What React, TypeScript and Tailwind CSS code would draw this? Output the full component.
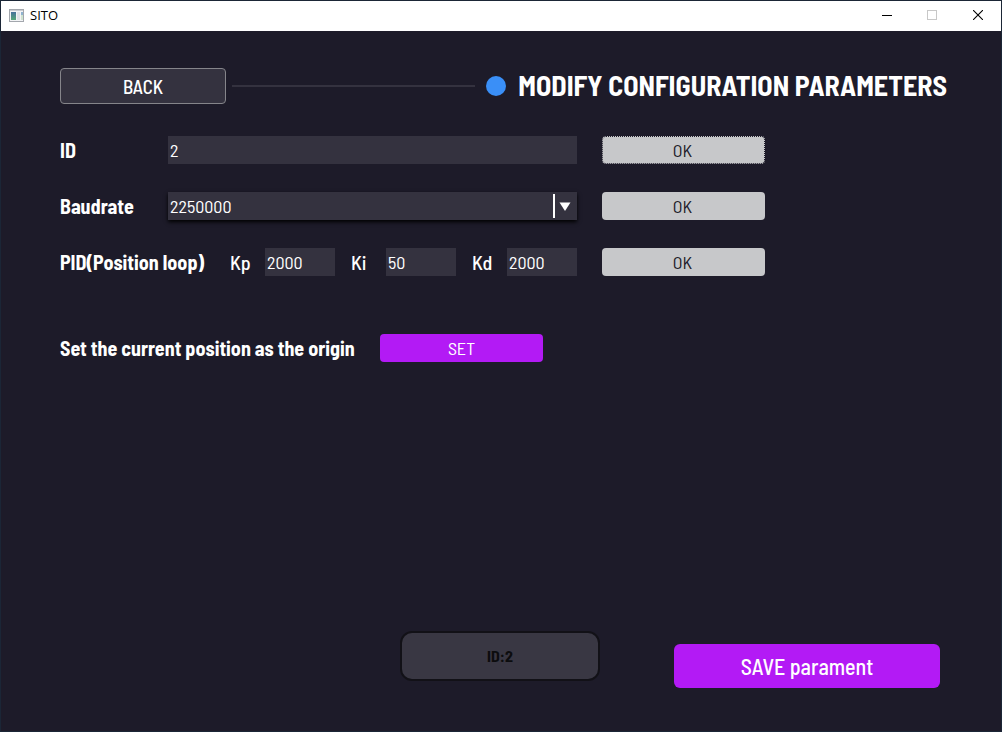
import React from "react";

const OK_ROW = "h-7 w-[163px] shrink-0 rounded bg-[#c7c8ca] pr-0.5 text-[18px] leading-7 text-[#1d1b29]";
const FIELD = "h-7 min-w-0 bg-[#34323f] px-0.5 text-[18px] leading-7 text-white outline-none";
const LABEL = "shrink-0 whitespace-nowrap text-[20px] font-bold leading-7";
const CAPTION_BUTTON = "flex h-full items-center justify-center pb-0.5";

function AppIcon() {
  return (
    <svg width="15" height="13" viewBox="0 0 15 13" aria-hidden="true">
      <defs>
        <linearGradient id="pane" x1="0" y1="0" x2="0" y2="1">
          <stop offset="0" stopColor="#47719c" />
          <stop offset="1" stopColor="#57a878" />
        </linearGradient>
      </defs>
      <rect x="0.5" y="0.5" width="14" height="12" fill="#f3f4f6" stroke="#a3a7ad" />
      <rect x="1" y="1" width="13" height="1" fill="#c9ccd1" />
      <rect x="2" y="3" width="5" height="8" fill="url(#pane)" />
      <rect x="8" y="3" width="3" height="8" fill="#dfe2e6" />
      <rect x="12" y="3" width="2" height="3" fill="#8fb3cf" />
      <rect x="12" y="6" width="2" height="5" fill="#cfe3cf" />
    </svg>
  );
}

function TitleBar() {
  return (
    <header className="flex h-[30px] items-center bg-white pl-2 text-black">
      <div className="flex flex-1 items-center gap-1.5 pb-0.5">
        <AppIcon />
        <h2 className="font-['Open_Sans','Noto_Sans',sans-serif] text-[13px] leading-5">SITO</h2>
      </div>
      <button type="button" aria-label="Minimize" className={`${CAPTION_BUTTON} w-[45px]`}>
        <svg width="10" height="10" viewBox="0 0 10 10" aria-hidden="true">
          <path d="M0 5.5H10" stroke="#000" />
        </svg>
      </button>
      <button type="button" aria-label="Maximize" disabled className={`${CAPTION_BUTTON} w-[46px]`}>
        <svg width="10" height="10" viewBox="0 0 10 10" aria-hidden="true">
          <rect x="0.5" y="0.5" width="9" height="9" fill="none" stroke="#c8c8c8" />
        </svg>
      </button>
      <button type="button" aria-label="Close" className={`${CAPTION_BUTTON} w-[46px]`}>
        <svg width="10" height="10" viewBox="0 0 10 10" aria-hidden="true">
          <path d="M0 0L10 10M10 0L0 10" stroke="#000" strokeWidth="1.1" />
        </svg>
      </button>
    </header>
  );
}

function Gain({ id, label, value }: { id: string; label: string; value: string }) {
  return (
    <div className="flex flex-1 items-center">
      <label htmlFor={id} className="w-[35px] shrink-0 text-[20px] font-medium leading-7">
        {label}
      </label>
      <input id={id} defaultValue={value} className={`${FIELD} w-0 flex-1`} />
    </div>
  );
}

export default function App() {
  return (
    <div className="flex min-h-screen flex-col border border-[#1b2636] bg-[#1d1b29] font-['Barlow_Semi_Condensed','Roboto_Condensed',sans-serif] text-white">
      <TitleBar />
      <main className="flex flex-1 flex-col pt-[37px] pr-[54px] pb-[43px] pl-[59px]">
        <div className="flex items-center">
          <button
            type="button"
            className="h-9 w-[166px] shrink-0 rounded border border-[#85858a] bg-[#34323f] pt-0.5 text-[19px] font-medium"
          >
            BACK
          </button>
          <div className="ml-1.5 h-0.5 flex-1 bg-[#34323f]" />
          <span className="mr-3 ml-[11px] size-5 shrink-0 rounded-full bg-[#3a8ff7]" />
          <h1 className="whitespace-nowrap pb-0.5 text-[28px] font-bold leading-[34px]">
            MODIFY CONFIGURATION PARAMETERS
          </h1>
        </div>

        <div className="mt-8 flex flex-col gap-7 pr-[182px]">
          <form className="flex items-center gap-[25px]" onSubmit={(e) => e.preventDefault()}>
            <div className="flex min-w-0 flex-1 items-center">
              <label htmlFor="device-id" className={`${LABEL} w-[108px]`}>
                ID
              </label>
              <input id="device-id" defaultValue="2" className={`${FIELD} flex-1`} />
            </div>
            <button type="submit" className={`${OK_ROW} border border-dotted border-[#1d1b29] leading-[26px]`}>
              OK
            </button>
          </form>

          <form className="flex items-center gap-[25px]" onSubmit={(e) => e.preventDefault()}>
            <div className="flex min-w-0 flex-1 items-center">
              <label htmlFor="baudrate" className={`${LABEL} w-[108px]`}>
                Baudrate
              </label>
              <div className="relative flex min-w-0 flex-1">
                <select
                  id="baudrate"
                  defaultValue="2250000"
                  className={`${FIELD} flex-1 appearance-none shadow-[0_2px_4px_#000000]`}
                >
                  <option>2250000</option>
                </select>
                <div className="pointer-events-none absolute inset-y-0.5 right-0 flex w-6 items-center border-l-2 border-white pl-1">
                  <svg width="12" height="9" viewBox="0 0 12 9" aria-hidden="true">
                    <path d="M0.5 0.5H11.5L6 9Z" fill="#fff" />
                  </svg>
                </div>
              </div>
            </div>
            <button type="submit" className={OK_ROW}>
              OK
            </button>
          </form>

          <form className="flex items-center gap-[25px]" onSubmit={(e) => e.preventDefault()}>
            <div className="flex min-w-0 flex-1 items-center">
              <span className={`${LABEL} w-[170px]`}>PID(Position loop)</span>
              <div className="flex min-w-0 flex-1 gap-4">
                <Gain id="kp" label="Kp" value="2000" />
                <Gain id="ki" label="Ki" value="50" />
                <Gain id="kd" label="Kd" value="2000" />
              </div>
            </div>
            <button type="submit" className={OK_ROW}>
              OK
            </button>
          </form>
        </div>

        <div className="mt-[58px] flex items-center">
          <span className={`${LABEL} w-80`}>Set the current position as the origin</span>
          <button type="button" className="h-7 w-[163px] rounded bg-[#b31af5] text-[18px] leading-7">
            SET
          </button>
        </div>

        <div className="mt-auto grid grid-cols-[1fr_200px_1fr] items-end pr-[7px]">
          <output className="col-start-2 mb-[7px] flex h-[50px] items-center justify-center rounded-xl border-2 border-[#121117] bg-[#393743] text-[16px] font-bold text-[#0c0c0e]">
            ID:2
          </output>
          <button
            type="button"
            className="h-11 w-[266px] justify-self-end rounded-md bg-[#b31af5] text-[22px] font-medium"
          >
            SAVE parament
          </button>
        </div>
      </main>
    </div>
  );
}
